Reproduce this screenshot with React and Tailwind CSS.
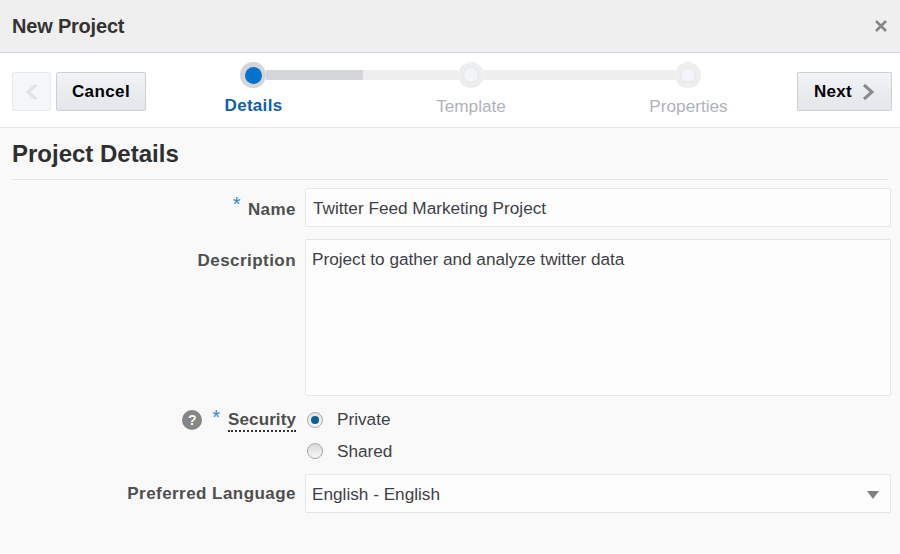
const Chevron = ({ flip, className }) => (
  <svg className={className} width="13" height="18" viewBox="0 0 13 18" fill="none">
    <path
      d={flip ? 'M11 2L3 9L11 16' : 'M2 2L10 9L2 16'}
      stroke="currentColor"
      strokeWidth="3"
    />
  </svg>
);

const StepDot = ({ active }) => (
  <div
    className={`w-[26px] h-[26px] rounded-full shrink-0 flex items-center justify-center ${
      active ? 'bg-[#d4d5d7]' : 'bg-[#eeeeee]'
    }`}
  >
    {active ? (
      <div className="w-[17px] h-[17px] rounded-full bg-[#0572ce]" />
    ) : (
      <div className="w-[16px] h-[16px] rounded-full bg-[#f3f4f7] border border-[#e4e7ec]" />
    )}
  </div>
);

const Label = ({ children, className = '' }) => (
  <div className={`w-[296px] shrink-0 text-right text-[#4f4f4f] font-bold text-[17px] tracking-[0.45px] leading-[20px] ${className}`}>
    {children}
  </div>
);

const App = () => {
  return (
    <div className="w-[900px] h-[554px] bg-[#f9f9f9] overflow-hidden text-[#3f3f46] font-['Liberation_Sans',Arial,sans-serif]">
      {/* Header */}
      <div className="h-[53px] bg-[#efefef] border-b border-[#cdd3dc] flex items-center justify-between pl-3 pr-[12px]">
        <h1 className="text-[20px] font-bold text-[#333333] tracking-[-0.2px]">New Project</h1>
        <svg width="14" height="14" viewBox="0 0 14 14" className="text-[#868686]">
          <path d="M2 2L12 12M12 2L2 12" stroke="currentColor" strokeWidth="2.6" />
        </svg>
      </div>

      {/* Train bar */}
      <div className="h-[75px] bg-white border-b border-[#e4e7ec] flex pl-3 pr-[9px]">
        <div className="flex gap-[5px] pt-[19px]">
          <button className="w-[39px] h-[39px] bg-[#f5f6f8] border border-[#e6e9ed] rounded-[2px] flex items-center justify-center text-[#dfe1e4]">
            <Chevron flip />
          </button>
          <button className="w-[90px] h-[39px] pt-[1px] bg-gradient-to-b from-[#f1f3f5] to-[#e3e6ea] border border-[#c9d0d8] rounded-[2px] text-black font-bold text-[17px] tracking-[0.4px]">
            Cancel
          </button>
        </div>

        <div className="flex-1 pt-[9px]">
          <div className="flex items-center ml-[94px] w-[461px]">
            <StepDot active />
            <div className="flex-1 h-[10px] flex bg-[#eeeeee]">
              <div className="w-[97px] bg-[#d4d5d7]" />
            </div>
            <StepDot />
            <div className="flex-1 h-[10px] bg-[#eeeeee]" />
            <StepDot />
          </div>
          <div className="flex mt-[8px] text-[17.2px] leading-[20px] ml-[-1px]">
            <div className="w-[217px] text-center font-bold text-[17px] tracking-[0.3px] text-[#0f5fae]">Details</div>
            <div className="w-[218px] text-center text-[#b0b2b8]">Template</div>
            <div className="w-[217px] text-center text-[#b0b2b8]">Properties</div>
          </div>
        </div>

        <div className="pt-[19px]">
          <button className="w-[95px] h-[39px] bg-gradient-to-b from-[#f1f3f5] to-[#e3e6ea] border border-[#c9d0d8] rounded-[2px] flex items-center justify-center gap-[10px] text-black font-bold text-[17px] tracking-[0.3px]">
            <span className="pt-[1px]">Next</span>
            <Chevron className="text-[#8a8a8a]" />
          </button>
        </div>
      </div>

      {/* Form */}
      <div className="px-3">
        <h2 className="h-[52px] flex items-center pt-[1px] border-b border-[#e0e3e8] text-[24px] font-bold text-[#2f2f2f]">
          Project Details
        </h2>
      </div>

      <div className="pr-[9px] pt-[8px] flex flex-col text-[17.2px]">
        <div className="flex items-center gap-[9px] h-[39px]">
          <Label className="pt-[2px]">
            <span className="text-[#2f87e0] font-normal text-[20px] leading-none relative top-[-4px] mr-[7px]">*</span>
            Name
          </Label>
          <input
            readOnly
            value="Twitter Feed Marketing Project"
            className="flex-1 h-[39px] bg-[#fdfdfd] border border-[#e4e7ec] rounded-[2px] px-[7px] pt-[2px] text-[17.2px] text-[#3f3f46] outline-none"
          />
        </div>

        <div className="flex gap-[9px] mt-[12px]">
          <Label className="pt-[12px]">Description</Label>
          <div className="flex-1 h-[157px] bg-[#fdfdfd] border border-[#e4e7ec] rounded-[2px] px-[6px] pt-[9px] leading-[20px]">
            Project to gather and analyze twitter data
          </div>
        </div>

        <div className="flex gap-[9px] mt-[8px]">
          <div className="w-[296px] shrink-0 flex justify-end items-start h-[32px] pt-[6px]">
            <div className="w-5 h-5 rounded-full bg-[#868686] text-white text-[14px] font-bold leading-5 text-center mr-[10px]">?</div>
            <span className="text-[#2f87e0] text-[20px] leading-none mr-[8px] mt-[-3px]">*</span>
            <span className="text-[#4f4f4f] font-bold text-[17px] tracking-[0.1px] leading-[20px] border-b-2 border-dotted border-[#333333] h-[22px]">Security</span>
          </div>
          <div className="flex flex-col pl-[2px]">
            <div className="flex items-center gap-[14px] h-[32px]">
              <div className="w-[16px] h-[16px] rounded-full border border-[#a8a8a8] bg-gradient-to-b from-[#e4e4e4] to-[#f8f8f8] flex items-center justify-center">
                <div className="w-[8px] h-[8px] rounded-full bg-[#0b5f96]" />
              </div>
              <span className="leading-[20px] mt-[-2px]">Private</span>
            </div>
            <div className="flex items-center gap-[14px] h-[31px]">
              <div className="w-[16px] h-[16px] rounded-full border border-[#a8a8a8] bg-gradient-to-b from-[#d8d8d8] to-[#f8f8f8] mt-[-1px]" />
              <span className="leading-[20px] mt-[-2px]">Shared</span>
            </div>
          </div>
        </div>

        <div className="flex items-center gap-[9px] mt-[7px]">
          <Label>Preferred Language</Label>
          <div className="flex-1 h-[39px] bg-[#fdfdfd] border border-[#e4e7ec] rounded-[2px] pl-[6px] pr-[11px] pt-[2px] flex items-center justify-between">
            English - English
            <svg width="12" height="8" viewBox="0 0 12 8" className="text-[#808080]">
              <path d="M0 0H12L6 8Z" fill="currentColor" />
            </svg>
          </div>
        </div>
      </div>
    </div>
  );
};

export default App;
